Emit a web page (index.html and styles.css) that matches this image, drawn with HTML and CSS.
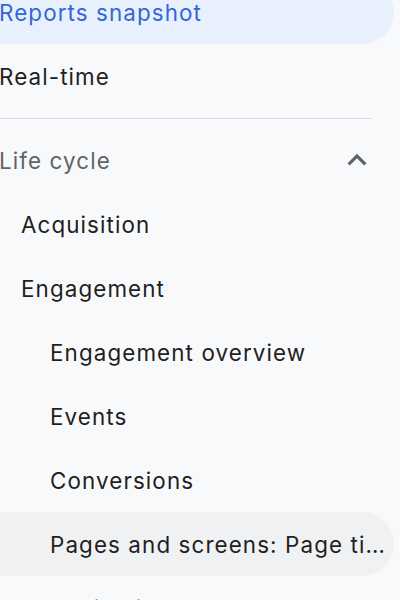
FILE: index.html
```html
<!DOCTYPE html>
<html lang="en">
<head>
<meta charset="utf-8">
<title>Reports navigation</title>
<link rel="stylesheet" href="styles.css">
</head>
<body>
<nav class="nav">
  <a class="item item--active">Reports snapshot</a>
  <a class="item">Real-time</a>
  <div class="divider"></div>
  <div class="item item--section">
    <span class="label">Life cycle</span>
    <svg class="chevron" viewBox="0 0 24 24" aria-hidden="true"><path d="M12 8l-6 6 1.41 1.41L12 10.83l4.59 4.58L18 14z"/></svg>
  </div>
  <a class="item level-1">Acquisition</a>
  <a class="item level-1">Engagement</a>
  <a class="item level-2">Engagement overview</a>
  <a class="item level-2">Events</a>
  <a class="item level-2">Conversions</a>
  <a class="item level-2 item--hover"><span class="label">Pages and screens: Page title and screen class</span></a>
  <a class="item level-1">Monetization</a>
</nav>
</body>
</html>
```
FILE: styles.css
```css
html, body {
  margin: 0;
  padding: 0;
  background: #f8f9fa;
  overflow: hidden;
}
.nav {
  display: flex;
  flex-direction: column;
  width: 396px;
  margin-top: -20px;
  margin-left: -2px;
  font-family: Inter, "Open Sans", sans-serif;
  font-weight: 440;
  font-size: 22.4px;
  letter-spacing: 1.1px;
  color: #1f1f1f;
}
.item {
  display: flex;
  align-items: center;
  height: 64px;
  padding-left: 1px;
  padding-right: 14px;
  border-radius: 0 32px 32px 0;
  box-sizing: border-box;
  white-space: nowrap;
}
.item--active {
  background: #e8f0fe;
  color: #3367d6;
}
.item--hover {
  background: #f0f1f3;
  padding-right: 8px;
}
.item--section {
  color: #5f6368;
  justify-content: space-between;
  padding-right: 18px;
}
.label {
  overflow: hidden;
  text-overflow: ellipsis;
  min-width: 0;
}
.level-1 { padding-left: 23px; }
.level-2 { padding-left: 52px; }
.divider {
  height: 1px;
  width: 374px;
  background: #dadce0;
  margin: 10px 0 9px;
}
.chevron {
  width: 38px;
  height: 38px;
  fill: #5f6368;
  flex: none;
}
```
